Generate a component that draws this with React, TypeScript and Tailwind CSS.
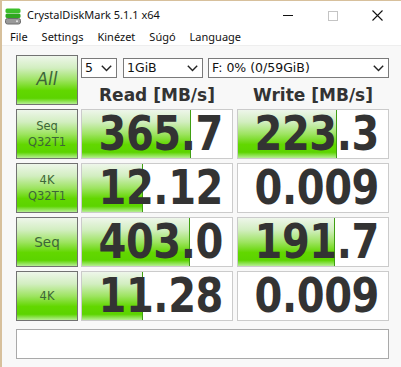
import React from "react";

const ROWS = [
  { label: ["Seq", "Q32T1"], read: "365.7", readBar: 109, write: "223.3", writeBar: 99 },
  { label: ["4K", "Q32T1"], read: "12.12", readBar: 61, write: "0.009", writeBar: 0 },
  { label: ["Seq"], read: "403.0", readBar: 108, write: "191.7", writeBar: 97, big: true },
  { label: ["4K"], read: "11.28", readBar: 61, write: "0.009", writeBar: 0 },
];

const GREEN =
  "bg-[linear-gradient(to_bottom,#eef6ea_0%,#d2eec0_25%,#9ee462_50%,#62d700_72%,#5cd400_88%,#b6ee94_100%)]";

function AppIcon() {
  return (
    <svg width="16" height="17" viewBox="0 0 16 17">
      <rect x="0.5" y="0.5" width="15" height="4.5" rx="1.5" fill="#3cbf2a" />
      <rect x="0.5" y="5.5" width="15" height="4.5" rx="1.5" fill="#2fa61f" />
      <rect x="0.5" y="10.5" width="15" height="5.5" rx="2" fill="#9a9a9a" stroke="#6d6d6d" />
      <circle cx="12" cy="13.2" r="1" fill="#e8e8e8" />
    </svg>
  );
}

function Chevron() {
  return (
    <svg width="11" height="7" viewBox="0 0 11 7" className="shrink-0">
      <polyline points="0.8,0.8 5.5,5.6 10.2,0.8" fill="none" stroke="#222" strokeWidth="1.4" />
    </svg>
  );
}

function Select({ value, w, className }: { value: string; w: string; className?: string }) {
  return (
    <div className={`${w} ${className ?? ""} h-[20px] flex items-center justify-between border border-[#7a7a7a] bg-white pl-[3px] pr-[4px] text-[12.5px] text-[#111]`}>
      <span className="leading-none">{value}</span>
      <Chevron />
    </div>
  );
}

function LabelButton({ lines, big }: { lines: string[]; big?: boolean }) {
  return (
    <div className={`w-[62px] h-[50px] shrink-0 border border-[#727272] ${GREEN} flex flex-col items-center justify-center text-[#3d6638]`}>
      {lines.map((l) => (
        <span key={l} className={big ? "text-[13.5px] leading-[16px]" : "text-[11.5px] leading-[16px]"}>
          {l}
        </span>
      ))}
    </div>
  );
}

function ValueBox({ value, bar }: { value: string; bar: number }) {
  return (
    <div className="relative w-[152px] h-[50px] shrink-0 border border-[#cbcbcb] bg-white">
      {bar > 0 && (
        <div
          className={`absolute left-0 top-0 bottom-0 border-r border-[#3f9f12] ${GREEN}`}
          style={{ width: bar }}
        />
      )}
      <div className="relative flex h-full items-center justify-end pr-[9px] pb-[3px]">
        <span className="scale-y-[1.2] text-[40px] font-bold leading-none tracking-[-0.4px] text-[#333]">
          {value}
        </span>
      </div>
    </div>
  );
}

export default function App() {
  return (
    <div className="w-[401px] h-[367px] overflow-hidden border-l-2 border-t border-[#d7c09c] bg-[#f8f8f8] font-['DejaVu_Sans',sans-serif]">
      {/* Title bar */}
      <div className="flex h-[29px] items-center bg-white">
        <div className="ml-[3px] mt-[1px]">
          <AppIcon />
        </div>
        <span className="ml-[6px] font-['Noto_Sans',sans-serif] text-[11px] text-[#111]">CrystalDiskMark 5.1.1 x64</span>
        <div className="ml-auto mr-[1px] flex h-full">
          <div className="flex w-[45px] items-center justify-center">
            <div className="h-px w-[10px] bg-[#111]" />
          </div>
          <div className="flex w-[45px] items-center justify-center">
            <div className="h-[10px] w-[10px] border border-[#c4c4c4]" />
          </div>
          <div className="flex w-[45px] items-center justify-center">
            <svg width="11" height="11" viewBox="0 0 11 11">
              <path d="M0.5 0.5 L10.5 10.5 M10.5 0.5 L0.5 10.5" stroke="#111" strokeWidth="1.1" />
            </svg>
          </div>
        </div>
      </div>

      {/* Menu */}
      <div className="flex h-[16px] items-center gap-[14px] border-b border-[#eeeeee] bg-white pl-[8px] font-['Noto_Sans',sans-serif] text-[11px] text-[#111]">
        <span>File</span>
        <span>Settings</span>
        <span>Kinézet</span>
        <span>Súgó</span>
        <span>Language</span>
      </div>

      {/* Body */}
      <div className="flex flex-col gap-[4px] pl-[14px] pt-[9px]">
        <div className="flex gap-[3px]">
          <div className={`flex h-[50px] w-[62px] items-center justify-center border border-[#727272] ${GREEN}`}>
            <span className="text-[17px] italic text-[#3d6638]">All</span>
          </div>
          <div className="flex w-[309px] flex-col">
            <div className="mt-[3px] flex">
              <Select value="5" w="w-[36px]" />
              <Select value="1GiB" w="w-[80px]" className="ml-[6px]" />
              <Select value="F: 0% (0/59GiB)" w="w-[181px]" className="ml-[5px]" />
            </div>
            <div className="mt-[7px] flex text-[17px] font-bold text-[#333]">
              <div className="w-[152px] text-center leading-[20px]">Read [MB/s]</div>
              <div className="ml-[4px] w-[152px] text-center leading-[20px]">Write [MB/s]</div>
            </div>
          </div>
        </div>

        {ROWS.map((r, i) => (
          <div key={i} className="flex">
            <LabelButton lines={r.label} big={r.big} />
            <div className="ml-[3px]">
              <ValueBox value={r.read} bar={r.readBar} />
            </div>
            <div className="ml-[4px]">
              <ValueBox value={r.write} bar={r.writeBar} />
            </div>
          </div>
        ))}

        <div className="mt-[4px] h-[30px] w-[373px] border border-[#a9a9a9] bg-white" />
      </div>
    </div>
  );
}
